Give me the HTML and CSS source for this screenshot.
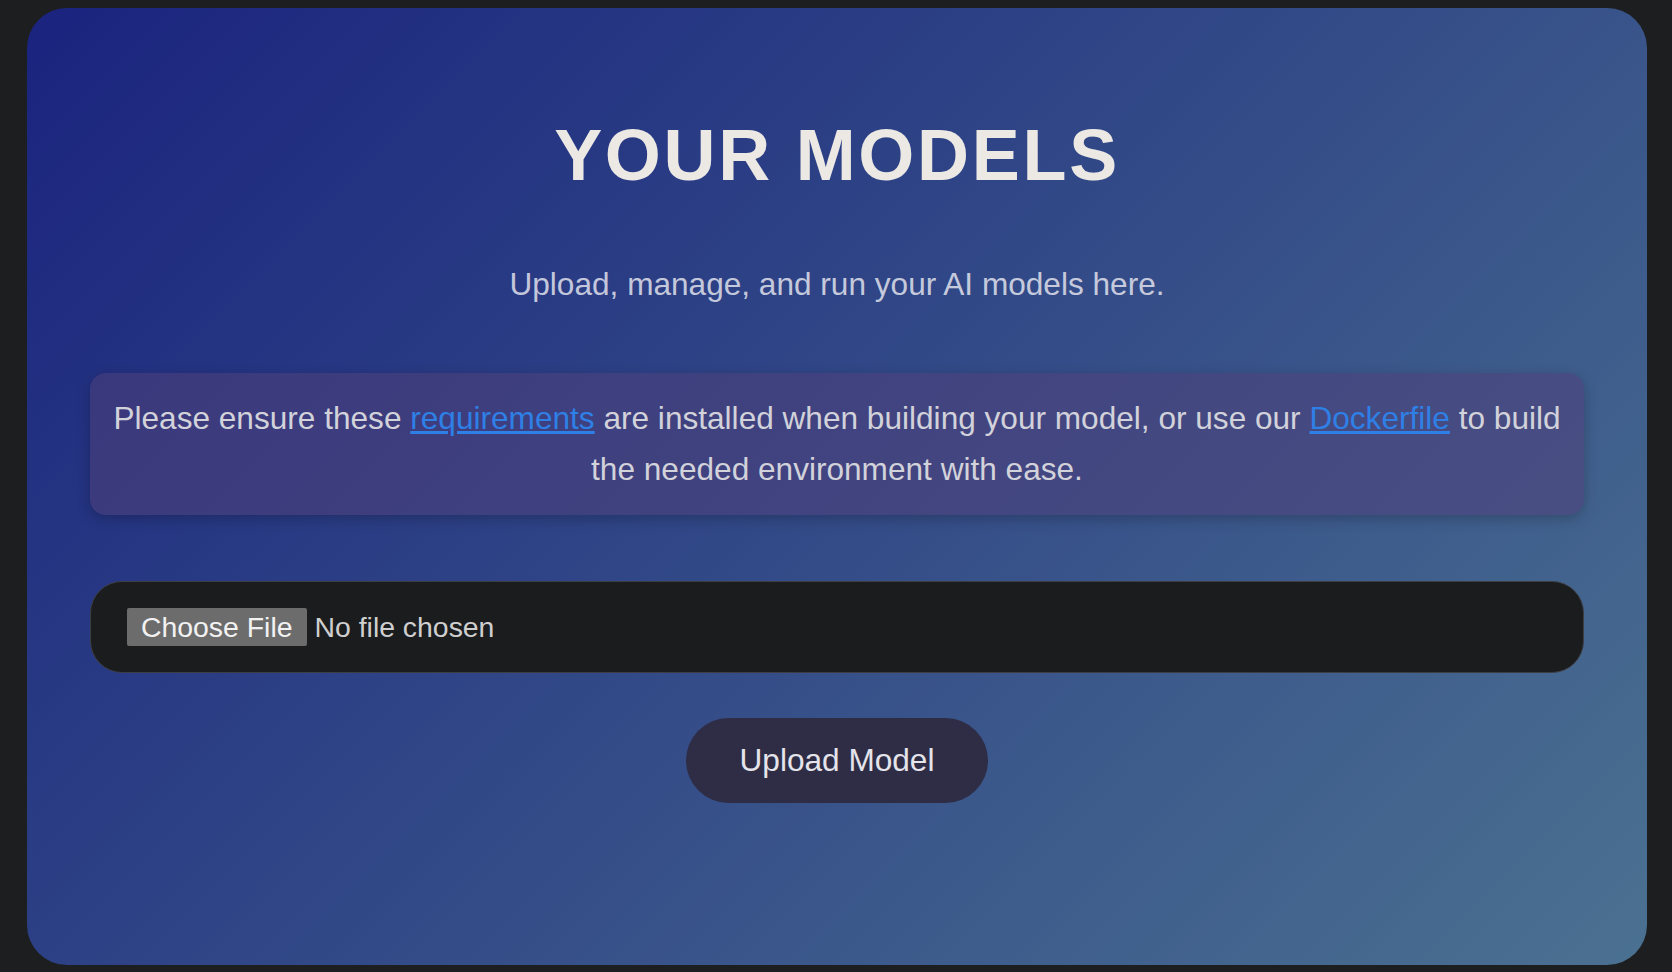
FILE: index.html
```html
<!doctype html>
<html>
<head>
    <meta charset="utf-8" />
    <title>Your Models</title>
    <link rel="stylesheet" href="styles.css">
</head>
<body>
    <div class="card">
        <h1 class="title">Your Models</h1>
        <p class="subtitle">Upload, manage, and run your AI models here.</p>

        <div class="notice">
            <span>Please ensure these</span> <a href="#">requirements</a> <span>are installed when building your model, or use our</span> <a href="#">Dockerfile</a> <span>to build the needed environment with ease.</span>
        </div>

        <form class="upload" onsubmit="return false">
            <input type="file" class="file-input" />
            <button type="submit" class="upload-btn">Upload Model</button>
        </form>
    </div>
</body>
</html>
```

FILE: styles.css
```css
html, body{
    height:100%;
}
body{
    margin:0;
    padding:8px 25px 7px 27px;
    box-sizing:border-box;
    background-color:#1c1e1f;
    font-family:"Liberation Sans", Arial, sans-serif;
}
.card{
    height:100%;
    box-sizing:border-box;
    padding:106px 63px 0;
    border-radius:40px;
    background:linear-gradient(135deg, #1a237e 0%, #4b7191 100%);
    text-align:center;
}
.title{
    margin:0;
    font-size:72px;
    font-weight:bold;
    letter-spacing:2.7px;
    text-transform:uppercase;
    color:#ece9e4;
}
.subtitle{
    margin:70px 0 0;
    font-size:31.6px;
    color:rgba(232,232,240,0.82);
}
.notice{
    margin-top:70px;
    padding:20px;
    border-radius:16px;
    font-size:31.6px;
    line-height:51px;
    color:#d2d2da;
    background-color:rgba(78,64,122,0.55);
    box-shadow:0 4px 14px rgba(0,0,0,0.22);
}
.notice a{
    color:#2f80e6;
}
.upload{
    margin-top:66px;
    display:flex;
    flex-direction:column;
    align-items:center;
}
.file-input{
    display:block;
    width:100%;
    box-sizing:border-box;
    padding:26px 36px;
    border:1px solid #3c3e44;
    border-radius:32px;
    background-color:#1b1c1e;
    color:#cfcfcf;
    font-family:"Liberation Sans", Arial, sans-serif;
    font-size:28.4px;
    line-height:38px;
    text-align:left;
}
.file-input::file-selector-button{
    margin-right:8px;
    padding:1px 14px;
    border:none;
    border-radius:2px;
    background-color:#6c6c6c;
    color:#f2f2f2;
    font:inherit;
    line-height:36px;
}
.upload-btn{
    margin-top:45px;
    padding:24px 54px;
    border:none;
    border-radius:50px;
    background-color:#2e2d45;
    color:#e4e4ea;
    font-family:"Liberation Sans", Arial, sans-serif;
    font-size:31.6px;
}
```
